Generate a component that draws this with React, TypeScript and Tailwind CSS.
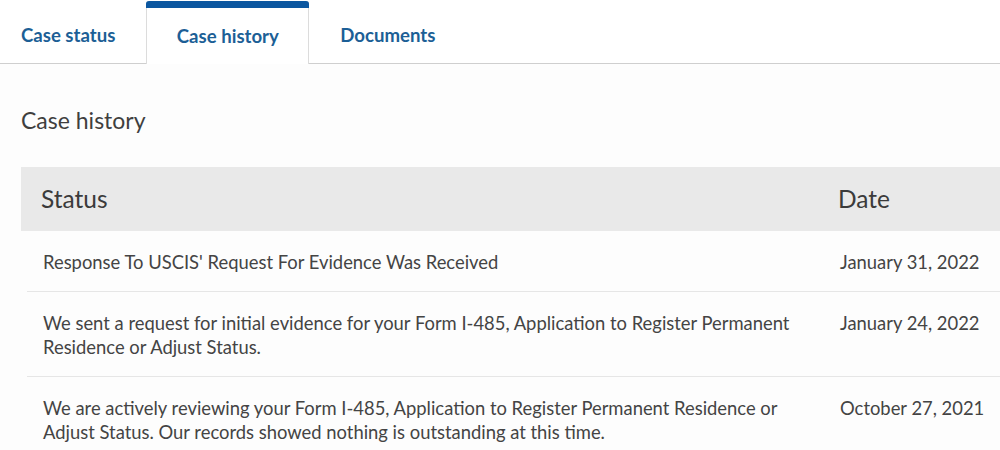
import React from "react";

interface HistoryRow {
  id: number;
  lines: string[];
  date: string;
}

const rows: HistoryRow[] = [
  {
    id: 1,
    lines: ["Response To USCIS' Request For Evidence Was Received"],
    date: "January 31, 2022",
  },
  {
    id: 2,
    lines: [
      "We sent a request for initial evidence for your Form I-485, Application to Register Permanent",
      "Residence or Adjust Status.",
    ],
    date: "January 24, 2022",
  },
  {
    id: 3,
    lines: [
      "We are actively reviewing your Form I-485, Application to Register Permanent Residence or",
      "Adjust Status. Our records showed nothing is outstanding at this time.",
    ],
    date: "October 27, 2021",
  },
];

const tabs = ["Case status", "Case history", "Documents"];

export default function App() {
  const activeTab = "Case history";

  return (
    <div className="min-h-screen w-[1000px] overflow-hidden bg-white font-['Lato',sans-serif]">
      {/* Tabs */}
      <div className="flex h-[64px] items-end border-b border-[#cfcfcf]">
        {tabs.map((tab) =>
          tab === activeTab ? (
            <div
              key={tab}
              className="relative -mb-px flex h-[63px] w-[163px] items-center justify-center rounded-t-[3px] border-x border-[#dcdcdc] bg-white pt-[8px]"
            >
              <div className="absolute -left-px -right-px top-0 h-[7px] rounded-t-[3px] bg-[#0b57a0]" />
              <span className="text-[18.6px] font-bold text-[#1c5f96]">
                {tab}
              </span>
            </div>
          ) : (
            <div
              key={tab}
              className={`flex h-[63px] items-center pt-[8px] ${
                tab === "Case status" ? "pl-[21px] pr-[31px]" : "pl-[31px]"
              }`}
            >
              <span className="text-[18.6px] font-bold text-[#1c5f96]">
                {tab}
              </span>
            </div>
          )
        )}
      </div>

      {/* Content */}
      <div className="bg-[#fdfdfd] pl-[21px] pt-[42px]">
        <h2 className="text-[23px] leading-[28px] text-[#3f3f3f]">
          Case history
        </h2>

        <div className="mt-[33px]">
          <div className="grid h-[64px] grid-cols-[1fr_182px] items-center bg-[#e9e9e9] text-[24.5px] text-[#3b3b3b]">
            <div className="pl-[20px]">Status</div>
            <div className="pl-[20px]">Date</div>
          </div>

          <div className="ml-[6px]">
            {rows.map((row) => (
              <div
                key={row.id}
                className="grid grid-cols-[1fr_182px] border-b border-[#e6e6e6] pb-[17px] pt-[19px] text-[18.4px] leading-[24px] text-[#444444]"
              >
                <div className="pl-[16px]">
                  {row.lines.map((line, i) => (
                    <div key={i} className="whitespace-nowrap">
                      {line}
                    </div>
                  ))}
                </div>
                <div className="whitespace-nowrap pl-[22px]">{row.date}</div>
              </div>
            ))}
          </div>
        </div>
      </div>
    </div>
  );
}
